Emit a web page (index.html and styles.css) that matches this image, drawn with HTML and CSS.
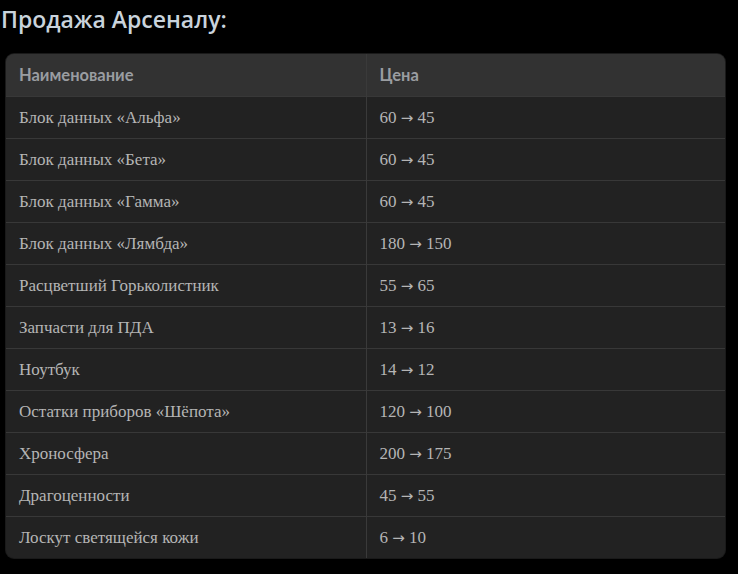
FILE: index.html
```html
<!DOCTYPE html>
<html lang="ru">
<head>
<meta charset="utf-8">
<link rel="stylesheet" href="styles.css">
</head>
<body>
<h2 class="title">Продажа Арсеналу:</h2>
<div class="wrap">
<table class="prices">
<thead><tr><th class="c1">Наименование</th><th>Цена</th></tr></thead>
<tbody>
<tr><td class="c1">Блок данных «Альфа»</td><td>60 <span class="arr">→</span> 45</td></tr>
<tr><td class="c1">Блок данных «Бета»</td><td>60 <span class="arr">→</span> 45</td></tr>
<tr><td class="c1">Блок данных «Гамма»</td><td>60 <span class="arr">→</span> 45</td></tr>
<tr><td class="c1">Блок данных «Лямбда»</td><td>180 <span class="arr">→</span> 150</td></tr>
<tr><td class="c1">Расцветший Горьколистник</td><td>55 <span class="arr">→</span> 65</td></tr>
<tr><td class="c1">Запчасти для ПДА</td><td>13 <span class="arr">→</span> 16</td></tr>
<tr><td class="c1">Ноутбук</td><td>14 <span class="arr">→</span> 12</td></tr>
<tr><td class="c1">Остатки приборов «Шёпота»</td><td>120 <span class="arr">→</span> 100</td></tr>
<tr><td class="c1">Хроносфера</td><td>200 <span class="arr">→</span> 175</td></tr>
<tr><td class="c1">Драгоценности</td><td>45 <span class="arr">→</span> 55</td></tr>
<tr><td class="c1">Лоскут светящейся кожи</td><td>6 <span class="arr">→</span> 10</td></tr>
</tbody>
</table>
</div>
</body>
</html>
```
FILE: styles.css
```css
html, body { margin: 0; padding: 0; background: #000; }
body { width: 738px; height: 574px; overflow: hidden; }
.title {
  margin: 0;
  padding: 3px 0 0 1px;
  height: 54px;
  box-sizing: border-box;
  font-family: "Open Sans", "Noto Sans", sans-serif;
  font-weight: 600;
  font-size: 23px;
  line-height: 32px;
  color: #c9d3dc;
}
.wrap {
  margin-left: 6px;
  width: 719px;
  border-radius: 8px;
  overflow: hidden;
  background: #222;
  box-shadow: 0 0 0 1px #1a1a1a;
}
.prices {
  width: 100%;
  border-collapse: collapse;
  table-layout: fixed;
}
.prices th, .prices td {
  height: 42px;
  padding: 0 13px;
  text-align: left;
  box-sizing: border-box;
}
.prices th {
  background: #323232;
  font-family: Lato, "Open Sans", sans-serif;
  font-weight: 700;
  font-size: 16.5px;
  color: #9a9da1;
}
.prices td {
  font-family: "Liberation Serif", "DejaVu Serif", serif;
  font-size: 17px;
  color: #b5b5b5;
  border-top: 1px solid #383838;
  padding-top: 2px;
}
.prices .arr {
  font-family: "DejaVu Sans", sans-serif;
  font-size: 15px;
}
.prices .c1 { width: 360px; border-right: 1px solid #3a3a3a; }
```
